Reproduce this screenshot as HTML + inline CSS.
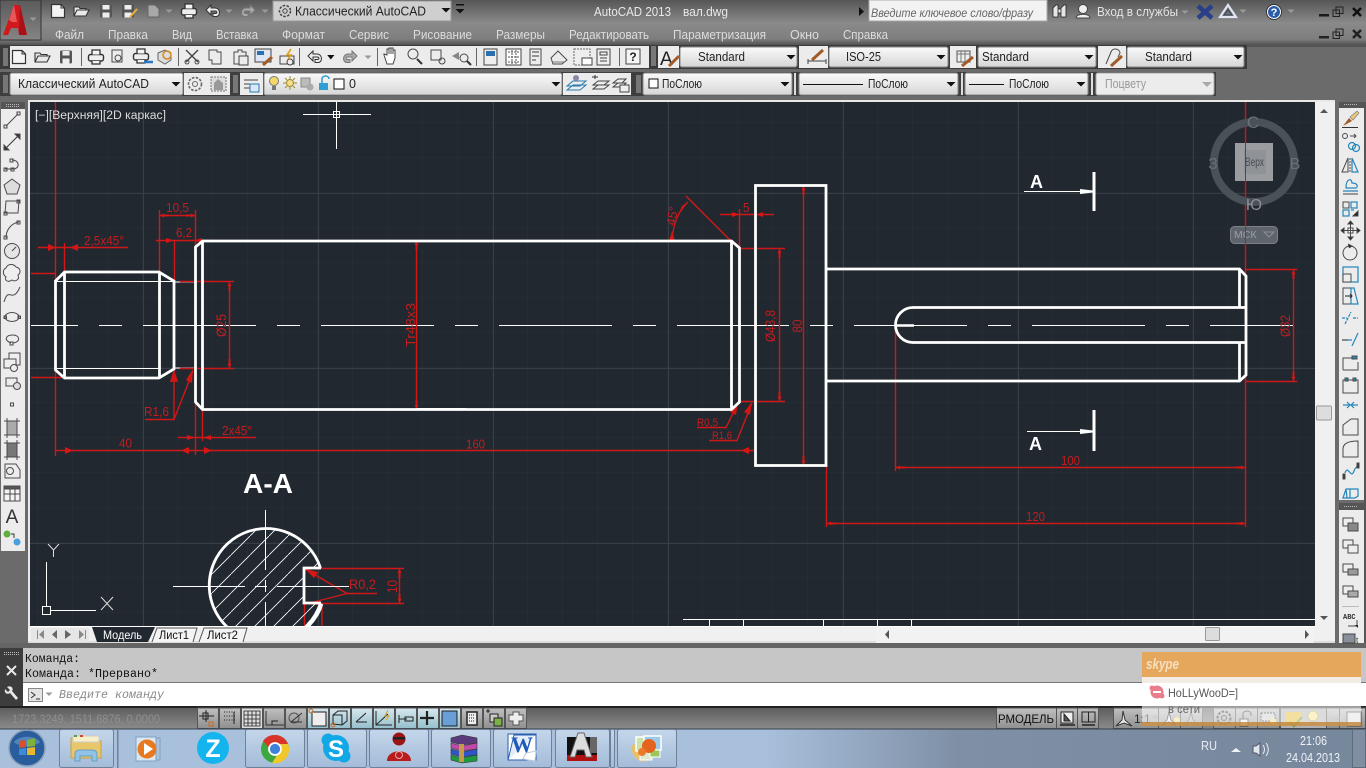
<!DOCTYPE html>
<html><head><meta charset="utf-8"><title>AutoCAD 2013 - вал.dwg</title>
<style>
html,body{margin:0;padding:0;width:1366px;height:768px;overflow:hidden;background:#666}
svg{display:block}
text{font-family:"Liberation Sans",sans-serif}
.m{font-size:12.5px;fill:#dcdcdc}
.c{font-size:12.5px;fill:#222}
.d{font-size:12.5px;fill:#c41d1d}
.i{fill:none;stroke:#4a4a4a;stroke-width:1}
.b{fill:none;stroke:#2586bb;stroke-width:1.2}
.r line,.r path{stroke:#d01818;stroke-width:1.4;fill:none}
.w{stroke:#fff;stroke-width:2.8;fill:none}
.t{stroke:#fff;stroke-width:1;fill:none}
</style></head><body>
<svg width="1366" height="768" viewBox="0 0 1366 768" xmlns="http://www.w3.org/2000/svg">
<defs>
<linearGradient id="tg" x1="0" y1="0" x2="0" y2="1"><stop offset="0" stop-color="#565656"/><stop offset=".5" stop-color="#8a8a8a"/><stop offset=".85" stop-color="#7e7e7e"/><stop offset="1" stop-color="#4a4a4a"/></linearGradient>
<linearGradient id="lg" x1="0" y1="0" x2="0" y2="1"><stop offset="0" stop-color="#5a5a5a"/><stop offset="1" stop-color="#858585"/></linearGradient>
<linearGradient id="cb" x1="0" y1="0" x2="0" y2="1"><stop offset="0" stop-color="#fafafa"/><stop offset="1" stop-color="#d6d6d6"/></linearGradient>
<linearGradient id="sb" x1="0" y1="0" x2="0" y2="1"><stop offset="0" stop-color="#5e5e5e"/><stop offset="1" stop-color="#8c8c8c"/></linearGradient>
<linearGradient id="sl" x1="0" y1="0" x2="0" y2="1"><stop offset="0" stop-color="#c0c0c0"/><stop offset="1" stop-color="#8f8f8f"/></linearGradient>
<linearGradient id="sbl" x1="0" y1="0" x2="0" y2="1"><stop offset="0" stop-color="#d8e8ee"/><stop offset="1" stop-color="#94bfcc"/></linearGradient>
<linearGradient id="task" x1="0" y1="0" x2="1" y2="0"><stop offset="0" stop-color="#a8c0dc"/><stop offset=".56" stop-color="#a8c0dc"/><stop offset=".7" stop-color="#7f90a6"/><stop offset="1" stop-color="#76879c"/></linearGradient>
<linearGradient id="btn" x1="0" y1="0" x2="0" y2="1"><stop offset="0" stop-color="#c4d6ea"/><stop offset="1" stop-color="#a3bcd9"/></linearGradient>
<pattern id="g1" width="35" height="35" patternUnits="userSpaceOnUse" x="3" y="18"><path d="M35 0V35M0 35H35" stroke="#2a3139" stroke-width="1" fill="none"/></pattern>
<pattern id="g2" width="175" height="175" patternUnits="userSpaceOnUse" x="143" y="18"><path d="M.5 0V175M0 .5H175" stroke="#373e45" stroke-width="1" fill="none"/></pattern>
<pattern id="hat" width="19" height="19" patternUnits="userSpaceOnUse" x="3" y="4"><path d="M0 19L19 0" stroke="#fff" stroke-width=".8" fill="none"/></pattern>
<pattern id="grip" width="2" height="2" patternUnits="userSpaceOnUse"><rect width="1" height="1" fill="#bbb"/></pattern>
<marker id="a" viewBox="0 0 9 5" refX="9" refY="2.500" markerWidth="9" markerHeight="5" markerUnits="userSpaceOnUse" orient="auto-start-reverse"><path d="M9 2.500L5 .5V1.500H0V3.500H5V4.500Z" fill="#d81515"/></marker>
<g id="doc"><path d="M-6.500-6.500H3L6.500-3V6.500H-6.500Z" style="fill:#f4f4f4;stroke:#333;stroke-width:1.200"/><path d="M3-6.500V-3H6.500" fill="none" stroke="#333"/></g>
<g id="open"><path d="M-7 5V-4H-2L-1-2.500H5V-1H-4L-7 5L-4-1H8L5 5Z" fill="#e8e8e8" stroke="#333" stroke-width="1.100"/></g>
<g id="save"><rect x="-6" y="-6.500" width="12" height="13" rx="1.500" fill="#555"/><rect x="-3.500" y="-6" width="7" height="4.500" fill="#eee"/><rect x="-3.500" y="1.500" width="7" height="5" fill="#eee"/></g>
<g id="print"><rect x="-7.500" y="-2.500" width="15" height="6.500" rx="2" fill="#eee" stroke="#333" stroke-width="1.400"/><path d="M-4-2.500V-7H4V-2.500M-4 4V7H4V4" fill="#f4f4f4" stroke="#333" stroke-width="1.300"/></g>
<g id="tri"><path d="M-3.500-1.500H3.500L0 2Z" fill="#9a9a9a"/></g>
<g id="ddk"><path d="M-4.500-2H4.500L0 2.500Z" fill="#111"/></g>
<g id="undo"><path d="M-7-1L-2-6V-3H2C7.500-3 8 5.500 3 5.500H0V2.500H2.500C4.500 2.500 4.500 0 2 0H-2V4Z" fill="#eee" stroke="#333"/></g>
<g id="redo"><path d="M7-1L2-6V-3H-2C-7.500-3-8 5.500-3 5.500H0V2.500H-2.500C-4.500 2.500-4.500 0-2 0H2V4Z" fill="#aaa" stroke="#777"/></g>
<g id="brush"><path d="M-8 7L-2-1L1 2Z" fill="#a25b26"/><path d="M-1-2L6-8L8-6L2 1Z" fill="#e8c878" stroke="#777" stroke-width=".6"/></g>
</defs>

<!-- base -->
<rect width="1366" height="768" fill="#6b6b6b"/>
<rect width="1366" height="46" fill="url(#tg)"/>
<rect y="44" width="1366" height="3" fill="#555"/>

<!-- logo -->
<rect x="0" y="0" width="41" height="40" fill="url(#lg)" stroke="#333"/>
<path d="M3 35L14 5H20L27 35H19L18 28H11L8 35Z" fill="#d0191d"/><path d="M14 5L17 22H12L9 20Z" fill="#e9565a"/><path d="M20 5L27 35H19Z" fill="#a81216"/>
<use href="#tri" x="33" y="19"/>

<!-- QAT -->
<use href="#doc" x="58" y="11"/><use href="#open" x="81" y="11"/><use href="#save" x="106" y="11"/><use href="#save" x="128" y="11"/>
<path d="M130 17L137 9" stroke="#e8b040" stroke-width="2"/>
<path d="M148 5H155L159 9V17H148Z" fill="#a8a8a8" stroke="#666"/>
<use href="#tri" x="169" y="11"/><use href="#print" x="189" y="11"/><use href="#undo" x="213" y="11"/><use href="#tri" x="229" y="11"/><use href="#redo" x="248" y="11"/><use href="#tri" x="265" y="11"/>
<rect x="273" y="1" width="178" height="20" fill="#cfcfcf" stroke="#999"/>
<circle cx="285" cy="11" r="5.500" fill="none" stroke="#444" stroke-width="1.500" stroke-dasharray="2.500 1.400"/><circle cx="285" cy="11" r="2.200" fill="none" stroke="#444"/>
<text x="295" y="15.500" font-size="13" fill="#222" textLength="131" lengthAdjust="spacingAndGlyphs">Классический AutoCAD</text>
<use href="#ddk" x="446" y="10"/><use href="#ddk" x="460" y="11"/><rect x="456" y="4" width="8" height="1.500" fill="#111"/>

<text x="594" y="16" font-size="13" fill="#e8e8e8" textLength="77" lengthAdjust="spacingAndGlyphs">AutoCAD 2013</text>
<text x="683" y="16" font-size="13" fill="#e8e8e8" textLength="45" lengthAdjust="spacingAndGlyphs">вал.dwg</text>
<path d="M859 7L864 11.500L859 16Z" fill="#111"/>
<rect x="869" y="0" width="178" height="21" fill="#f2f2f2" stroke="#aaa"/>
<text x="871" y="17" font-size="12" font-style="italic" fill="#666" textLength="162" lengthAdjust="spacingAndGlyphs">Введите ключевое слово/фразу</text>
<path d="M1053 17V8L1056 5H1058V17ZM1061 17V8L1064 5H1066V17Z M1058 9H1061V13H1058Z" fill="#e6e6e6" stroke="#222" stroke-width=".8"/>
<circle cx="1083" cy="9" r="4.500" fill="#eee" stroke="#444"/><path d="M1076 18C1076 13 1090 13 1090 18Z" fill="#eee" stroke="#444"/>
<text x="1097" y="16" font-size="12.500" fill="#e4e4e4" textLength="81" lengthAdjust="spacingAndGlyphs">Вход в службы</text>
<use href="#tri" x="1185" y="12" />
<path d="M1198 6L1212 18M1212 6L1198 18" stroke="#2a3f88" stroke-width="4.500"/>
<path d="M1228 5L1236 17H1220Z" fill="none" stroke="#dfe6f2" stroke-width="2.200"/><path d="M1228 10L1232 15H1224Z" fill="none" stroke="#345" />
<use href="#tri" x="1243" y="11"/>
<circle cx="1274" cy="12" r="7.500" fill="#fff" stroke="#333"/><circle cx="1274" cy="12" r="6" fill="#2b5ca8"/><text x="1274" y="16" font-size="11" font-weight="bold" fill="#fff" text-anchor="middle">?</text>
<use href="#tri" x="1291" y="11"/>
<rect x="1319" y="14" width="10" height="2.500" fill="#1a1a1a"/><g transform="translate(1338,13)"><rect x="-5" y="-3" width="6.500" height="6.500" fill="none" stroke="#222"/><rect x="-2" y="-6" width="7" height="6.500" fill="none" stroke="#222"/></g>
<path d="M1353 8L1361 16M1361 8L1353 16" stroke="#111" stroke-width="2.600"/>
<rect x="1319" y="36" width="10" height="2.500" fill="#222"/><g transform="translate(1338,35)"><rect x="-5" y="-3" width="6.500" height="6.500" fill="none" stroke="#222"/><rect x="-2" y="-6" width="7" height="6.500" fill="none" stroke="#222"/></g>
<path d="M1353 30L1361 38M1361 30L1353 38" stroke="#222" stroke-width="2.600"/>

<!-- menu -->
<text class="m" x="55" y="39" textLength="29" lengthAdjust="spacingAndGlyphs">Файл</text><text class="m" x="108" y="39" textLength="40" lengthAdjust="spacingAndGlyphs">Правка</text><text class="m" x="172" y="39" textLength="20" lengthAdjust="spacingAndGlyphs">Вид</text><text class="m" x="216" y="39" textLength="42" lengthAdjust="spacingAndGlyphs">Вставка</text><text class="m" x="282" y="39" textLength="43" lengthAdjust="spacingAndGlyphs">Формат</text><text class="m" x="349" y="39" textLength="40" lengthAdjust="spacingAndGlyphs">Сервис</text><text class="m" x="413" y="39" textLength="59" lengthAdjust="spacingAndGlyphs">Рисование</text><text class="m" x="496" y="39" textLength="49" lengthAdjust="spacingAndGlyphs">Размеры</text><text class="m" x="569" y="39" textLength="80" lengthAdjust="spacingAndGlyphs">Редактировать</text><text class="m" x="673" y="39" textLength="93" lengthAdjust="spacingAndGlyphs">Параметризация</text><text class="m" x="790" y="39" textLength="29" lengthAdjust="spacingAndGlyphs">Окно</text><text class="m" x="843" y="39" textLength="45" lengthAdjust="spacingAndGlyphs">Справка</text>

<!-- toolbar 1 -->
<rect x="0" y="45" width="1247" height="24" fill="#3b3b3b"/>
<rect x="10" y="46" width="639" height="22" fill="#ececec"/>
<rect x="3" y="48" width="5" height="18" fill="#777"/><rect x="651" y="46" width="5" height="20" fill="#777"/>
<rect x="658" y="46" width="21" height="22" fill="#ececec"/>
<use href="#doc" x="19" y="57"/><use href="#open" x="42" y="57"/><use href="#save" x="66" y="57"/><rect x="81" y="48" width="1" height="18" fill="#666"/>
<use href="#print" x="96" y="57"/><path class="i" d="M112 50H122V62H112Z"/><circle cx="118" cy="58" r="3" class="i"/>
<use href="#print" x="141" y="56"/><path d="M144 62H153" stroke="#2b78c4" stroke-width="2.500"/>
<path d="M158 53L165 50L171 53V60L165 64L158 60Z" fill="#ddd" stroke="#666"/><circle cx="167" cy="55" r="4" fill="none" stroke="#d48a20" stroke-width="1.500"/>
<rect x="178" y="48" width="1" height="18" fill="#666"/>
<path d="M186 50L198 62M198 50L186 62" stroke="#444" stroke-width="1.400"/><circle cx="187" cy="62" r="2" class="i"/><circle cx="197" cy="62" r="2" class="i"/>
<path class="i" d="M209 50H217V52H221V64H212V60H209Z"/><path class="i" d="M234 52H238V50H242V52H246V64H234Z"/><rect x="239" y="56" width="9" height="9" fill="#ececec" stroke="#444"/>
<rect x="255" y="49" width="16" height="13" fill="#dde6f2" stroke="#444"/><rect x="257" y="51" width="7" height="4" fill="#2a6fb0"/><path d="M263 65L272 57" stroke="#a25b26" stroke-width="3"/>
<rect x="280" y="56" width="14" height="8" fill="none" stroke="#444"/><circle cx="290" cy="62" r="3" fill="#eee" stroke="#444"/><path d="M291 49L287 55H291L288 59" stroke="#e0a020" stroke-width="1.600" fill="none"/>
<rect x="299" y="48" width="1" height="18" fill="#666"/>
<use href="#undo" x="315" y="57"/><use href="#ddk" x="331" y="57" transform="translate(66,0) scale(.8,1)"/><use href="#redo" x="350" y="57"/><use href="#tri" x="368" y="57"/>
<rect x="377" y="48" width="1" height="18" fill="#666"/>
<path d="M387 64L384 55V54L387 55V49H389V54V48H391V54V48H393V54V50H395V58L393 64Z" fill="#fff" stroke="#444"/>
<circle cx="413" cy="54" r="5" class="i"/><path d="M417 59L422 64" stroke="#333" stroke-width="2"/>
<rect class="i" x="431" y="50" width="10" height="10"/><circle cx="442" cy="61" r="3" class="i"/>
<path d="M452 56L459 52V60Z" fill="#888"/><circle cx="464" cy="58" r="4" class="i"/><path d="M467 61L471 65" stroke="#333" stroke-width="2"/>
<rect x="476" y="48" width="1" height="18" fill="#666"/>
<rect x="484" y="49" width="13" height="16" fill="#eee" stroke="#444"/><rect x="486" y="51" width="9" height="5" fill="#2a6fb0"/>
<rect x="506" y="49" width="15" height="16" fill="#fff" stroke="#444"/><path d="M508 52H519M508 57H519M508 62H519M512 50V64M516 50V64" stroke="#555" stroke-dasharray="2 1"/>
<path class="i" d="M530 49H541V65H530Z"/><path d="M532 52H539M532 56H539M532 60H536" stroke="#777" stroke-width="1.600"/>
<path class="i" d="M551 58L558 51L567 60L562 64H553Z"/><path d="M553 62L565 62" stroke="#777"/>
<rect x="574" y="49" width="16" height="16" fill="#eee" stroke="#666" stroke-dasharray="2 1"/><rect x="582" y="58" width="10" height="7" fill="#fff" stroke="#444"/>
<rect x="597" y="49" width="13" height="16" fill="#eee" stroke="#444"/><path d="M600 52H607V55H600ZM600 58H607M600 61H607" stroke="#444" fill="none"/>
<rect x="619" y="48" width="1" height="18" fill="#666"/>
<rect x="626" y="49" width="14" height="15" fill="#f5f5f5" stroke="#444"/><text x="633" y="61" font-size="12" font-weight="bold" fill="#222" text-anchor="middle">?</text>
<text x="660" y="65" font-size="19" fill="#222">A</text><path d="M669 66L679 56" stroke="#a25b26" stroke-width="3"/>

<rect x="680" y="47" width="117" height="20" rx="2" fill="url(#cb)" stroke="#888"/><text class="c" x="698" y="61" textLength="47" lengthAdjust="spacingAndGlyphs">Standard</text><use href="#ddk" x="791" y="57"/>
<rect x="799" y="46" width="29" height="22" fill="#ececec"/><path d="M808 64V59M826 64V59M808 61H826" stroke="#444"/><path d="M812 60L823 50" stroke="#a25b26" stroke-width="3"/>
<rect x="829" y="47" width="119" height="20" rx="2" fill="url(#cb)" stroke="#888"/><text class="c" x="846" y="61" textLength="35" lengthAdjust="spacingAndGlyphs">ISO-25</text><use href="#ddk" x="941" y="57"/>
<rect x="950" y="46" width="26" height="22" fill="#ececec"/><rect x="957" y="51" width="13" height="11" fill="#eee" stroke="#555"/><path d="M957 54H970M961 51V62M965 51V62" stroke="#777"/><path d="M962 66L973 57" stroke="#a25b26" stroke-width="3"/>
<rect x="978" y="47" width="118" height="20" rx="2" fill="url(#cb)" stroke="#888"/><text class="c" x="982" y="61" textLength="47" lengthAdjust="spacingAndGlyphs">Standard</text><use href="#ddk" x="1089" y="57"/>
<rect x="1098" y="46" width="28" height="22" fill="#ececec"/><path class="i" d="M1106 64L1111 52C1113 47 1120 49 1120 53L1118 57"/><path d="M1111 66L1122 56" stroke="#a25b26" stroke-width="3"/>
<rect x="1127" y="47" width="117" height="20" rx="2" fill="url(#cb)" stroke="#888"/><text class="c" x="1145" y="61" textLength="47" lengthAdjust="spacingAndGlyphs">Standard</text><use href="#ddk" x="1238" y="57"/>

<!-- toolbar 2 -->
<rect x="0" y="72" width="1216" height="24" fill="#3f3f3f"/>
<rect x="3" y="75" width="5" height="18" fill="#777"/>
<rect x="10" y="73" width="173" height="22" rx="2" fill="url(#cb)" stroke="#888"/><text class="c" x="18" y="88" textLength="131" lengthAdjust="spacingAndGlyphs">Классический AutoCAD</text><use href="#ddk" x="176" y="84"/>
<rect x="184" y="73" width="46" height="22" fill="#ececec"/>
<circle cx="195" cy="84" r="6.500" fill="none" stroke="#666" stroke-width="1.600" stroke-dasharray="2.500 1.400"/><circle cx="195" cy="84" r="2.500" fill="none" stroke="#666"/>
<rect x="211" y="77" width="15" height="14" fill="#ddd" stroke="#777" stroke-dasharray="2 1"/><path d="M214 90V83L218 79L223 83V90Z" fill="#999"/>
<rect x="233" y="75" width="5" height="18" fill="#777"/>
<rect x="240" y="73" width="23" height="22" fill="#ececec"/>
<path d="M244 80H258M244 84H258M244 88H252" stroke="#444"/><rect x="250" y="84" width="9" height="8" fill="#dbe7f2" stroke="#2b7ab0"/>
<rect x="264" y="73" width="298" height="22" rx="2" fill="url(#cb)" stroke="#888"/>
<circle cx="274" cy="81" r="4.500" fill="#f5d76a" stroke="#777"/><rect x="272" y="86" width="4" height="4" fill="#777"/>
<circle cx="290" cy="83" r="3.500" fill="#f5e08a" stroke="#a08a30"/><path d="M290 76V79M290 87V90M283 83H286M294 83H297M285 78L287 80M293 86L295 88M295 78L293 80M287 86L285 88" stroke="#a08a30"/>
<rect x="301" y="78" width="9" height="9" fill="#bbb" stroke="#888"/><circle cx="310" cy="87" r="3.500" fill="#aaa"/>
<rect x="319" y="83" width="9" height="7" fill="#2f9ed0"/><path d="M322 83V79C322 75 329 75 329 79" fill="none" stroke="#2f9ed0" stroke-width="1.500"/>
<rect x="334" y="79" width="10" height="10" fill="#fff" stroke="#111"/><text class="c" x="349" y="88" fill="#111">0</text>
<use href="#ddk" x="556" y="84"/>
<rect x="563" y="73" width="68" height="22" fill="#ececec"/>
<path d="M567 90L573 85H586L580 90ZM567 86L573 81H586L580 86Z" fill="none" stroke="#2b7ab0"/><circle cx="576" cy="78" r="3" fill="#88a"/>
<path d="M593 89L598 85H609L604 89ZM593 85L598 81H609L604 85Z" fill="none" stroke="#444"/><path d="M592 77H598M595 75V79" stroke="#333"/>
<path d="M613 87L618 83H626L622 87ZM613 83L618 79H626L622 83Z" fill="none" stroke="#444"/><rect x="620" y="85" width="9" height="7" fill="#eee" stroke="#444"/>
<rect x="636" y="75" width="5" height="18" fill="#777"/>
<rect x="643" y="73" width="149" height="22" rx="2" fill="url(#cb)" stroke="#888"/><rect x="649" y="79" width="9" height="9" fill="#fff" stroke="#111"/><text class="c" x="662" y="88" textLength="40" lengthAdjust="spacingAndGlyphs">ПоСлою</text><use href="#ddk" x="785" y="84"/>
<rect x="794" y="73" width="2" height="22" fill="#ddd"/>
<rect x="799" y="73" width="159" height="22" rx="2" fill="url(#cb)" stroke="#888"/><rect x="803" y="84" width="60" height="1" fill="#111"/><text class="c" x="868" y="88" textLength="40" lengthAdjust="spacingAndGlyphs">ПоСлою</text><use href="#ddk" x="951" y="84"/>
<rect x="961" y="73" width="2" height="22" fill="#ddd"/>
<rect x="965" y="73" width="123" height="22" rx="2" fill="url(#cb)" stroke="#888"/><rect x="969" y="84" width="35" height="1" fill="#111"/><text class="c" x="1009" y="88" textLength="40" lengthAdjust="spacingAndGlyphs">ПоСлою</text><use href="#ddk" x="1081" y="84"/>
<rect x="1091" y="73" width="2" height="22" fill="#ddd"/>
<rect x="1096" y="73" width="118" height="22" rx="2" fill="#ececec" stroke="#aaa"/><text class="c" x="1105" y="88" style="fill:#999" textLength="41" lengthAdjust="spacingAndGlyphs">Поцвету</text><path d="M1202 82H1212L1207 87Z" fill="#aaa"/>

<!-- frame -->
<rect x="28" y="100" width="1307" height="545" fill="#e8e8e8"/>

<!-- canvas -->
<rect x="30" y="102" width="1285" height="525" fill="#212830"/>
<svg x="30" y="102" width="1285" height="525" viewBox="30 102 1285 525">
<rect x="30" y="102" width="1285" height="525" fill="url(#g1)"/>
<rect x="30" y="102" width="1285" height="525" fill="url(#g2)"/>

<!-- centre line -->
<path class="t" d="M31 325.500H78M99 325.500H122M143 325.500H256M277 325.500H300M321 325.500H434M455 325.500H478M499 325.500H612M633 325.500H656M677 325.500H789M810 325.500H833M854 325.500H967M988 325.500H1011M1032 325.500H1145M1166 325.500H1189M1210 325.500H1293"/>

<!-- thin white -->
<path class="t" d="M56 281.500H174M56 368.500H159M174 282H195M174 368H195M739 248.500H755M739 401.500H755"/>
<path class="t" d="M416 241.500H466M416 408.500H466M790 185.500H812M790 465.500H812"/>

<!-- red dims -->
<g class="r">
<line x1="55.500" y1="102" x2="55.500" y2="456"/>
<line x1="1245.500" y1="102" x2="1245.500" y2="527"/>
<line x1="38" y1="247.500" x2="128" y2="247.500"/>
<line x1="64.500" y1="243" x2="64.500" y2="272"/>
<line x1="31" y1="273.500" x2="56" y2="273.500"/><line x1="31" y1="377.500" x2="64" y2="377.500"/>
<line x1="159.500" y1="210" x2="159.500" y2="272"/><line x1="195.500" y1="210" x2="195.500" y2="247"/>
<line x1="160" y1="215.500" x2="195" y2="215.500" marker-start="url(#a)" marker-end="url(#a)"/>
<line x1="156" y1="240.500" x2="214" y2="240.500"/><line x1="174.500" y1="240" x2="174.500" y2="281"/>
<line x1="229.500" y1="282" x2="229.500" y2="368" marker-start="url(#a)" marker-end="url(#a)"/>
<line x1="180" y1="281.500" x2="234" y2="281.500"/><line x1="180" y1="368.500" x2="234" y2="368.500"/>
<line x1="174" y1="370" x2="174" y2="419.500"/><path d="M145 419.500H174L193 371"/>
<path d="M174 369L178 382H170Z" style="fill:#d01515;stroke:none"/><path d="M193 369L192 383L186 380Z" style="fill:#d01515;stroke:none"/>
<line x1="55" y1="450.500" x2="755" y2="450.500"/>
<line x1="195.500" y1="370" x2="195.500" y2="455"/><line x1="202.500" y1="409" x2="202.500" y2="441"/>
<line x1="178" y1="437.500" x2="256" y2="437.500"/>
<line x1="416.500" y1="241" x2="416.500" y2="409" marker-start="url(#a)" marker-end="url(#a)"/>
<path d="M672 241C673 224 678 211 688 202"/>
<line x1="686" y1="196" x2="731" y2="241"/>
<line x1="720" y1="214.500" x2="774" y2="214.500"/><line x1="739.500" y1="209" x2="739.500" y2="255"/><line x1="755.500" y1="209" x2="755.500" y2="255"/>
<line x1="779.500" y1="249" x2="779.500" y2="401" marker-start="url(#a)" marker-end="url(#a)"/>
<line x1="740" y1="248.500" x2="785" y2="248.500"/><line x1="740" y1="401.500" x2="785" y2="401.500"/>
<line x1="803.500" y1="186" x2="803.500" y2="465" marker-start="url(#a)" marker-end="url(#a)"/>
<path d="M697 427.500H726L738 403"/><path d="M709 440.500H737L752 403"/>
<path d="M738 402L736 415L730 412Z" style="fill:#d01515;stroke:none"/><path d="M752 402L750 415L744 412Z" style="fill:#d01515;stroke:none"/>
<line x1="895.500" y1="326" x2="895.500" y2="471"/>
<line x1="896" y1="467.500" x2="1245" y2="467.500" marker-start="url(#a)" marker-end="url(#a)"/>
<line x1="826.500" y1="466" x2="826.500" y2="527"/>
<line x1="827" y1="523.500" x2="1245" y2="523.500" marker-start="url(#a)" marker-end="url(#a)"/>
<line x1="1293.500" y1="270" x2="1293.500" y2="381" marker-start="url(#a)" marker-end="url(#a)"/>
<line x1="1246" y1="269.500" x2="1297" y2="269.500"/><line x1="1246" y1="381.500" x2="1297" y2="381.500"/>
<line x1="304" y1="568.500" x2="404" y2="568.500"/><line x1="304" y1="603.500" x2="404" y2="603.500"/>
<line x1="399.500" y1="569" x2="399.500" y2="603" marker-start="url(#a)" marker-end="url(#a)"/>
<path d="M377 593.500H347L305 569M347 593.500L306 604"/>
<path d="M304.500 604V627M322 604V627"/>
</g>
<path d="M48 244L56 247.500L48 251ZM78 244L70 247.500L78 251Z" fill="#d81515"/>
<path d="M166 238L174 240.500L166 243ZM202 238L194 240.500L202 243Z" fill="#d81515"/>
<path d="M65 447L73 450.500L65 454ZM189 447L181 450.500L189 454ZM204 447L212 450.500L204 454ZM749 447L741 450.500L749 454Z" fill="#d81515"/>
<path d="M187 435L195 437.500L187 440ZM211 435L203 437.500L211 440ZM732 212L739 214.500L732 217ZM763 212L756 214.500L763 217Z" fill="#d81515"/>
<path d="M669 241L675 241L672 231ZM682 206L688 202L678 216Z" fill="#d81515"/>
<path d="M305 569L318 572L314 578ZM306 604L320 600L320 605Z" fill="#d81515"/>

<!-- red text -->
<text class="d" x="84" y="245" textLength="40" lengthAdjust="spacingAndGlyphs">2,5x45°</text>
<text class="d" x="166" y="212" textLength="23" lengthAdjust="spacingAndGlyphs">10,5</text>
<text class="d" x="176" y="237" textLength="16" lengthAdjust="spacingAndGlyphs">6,2</text>
<text class="d" x="144" y="416" textLength="25" lengthAdjust="spacingAndGlyphs">R1,6</text>
<text class="d" x="119" y="447.500" textLength="13" lengthAdjust="spacingAndGlyphs">40</text>
<text class="d" x="222" y="435" textLength="30" lengthAdjust="spacingAndGlyphs">2x45°</text>
<text class="d" x="466" y="448.500" textLength="19" lengthAdjust="spacingAndGlyphs">160</text>
<text class="d" x="743" y="212" textLength="6.500" lengthAdjust="spacingAndGlyphs">5</text>
<text class="d" x="697" y="426" style="font-size:11px" textLength="21" lengthAdjust="spacingAndGlyphs">R0,5</text>
<text class="d" x="712" y="439" style="font-size:11px" textLength="20" lengthAdjust="spacingAndGlyphs">R1,6</text>
<text class="d" x="1061" y="465" textLength="19" lengthAdjust="spacingAndGlyphs">100</text>
<text class="d" x="1026" y="521" textLength="19" lengthAdjust="spacingAndGlyphs">120</text>
<text class="d" x="349" y="589" style="font-size:13.500px" textLength="27" lengthAdjust="spacingAndGlyphs">R0,2</text>
<text class="d" transform="translate(226,337) rotate(-90)" style="font-size:14px" textLength="23" lengthAdjust="spacingAndGlyphs">Ø25</text>
<text class="d" transform="translate(415,347) rotate(-90)" style="font-size:13px" textLength="44" lengthAdjust="spacingAndGlyphs">Tr48x3</text>
<text class="d" transform="translate(675,226) rotate(-80)" style="font-size:13px" textLength="19" lengthAdjust="spacingAndGlyphs">45°</text>
<text class="d" transform="translate(775,342) rotate(-90)" style="font-size:13.500px" textLength="32" lengthAdjust="spacingAndGlyphs">Ø43,8</text>
<text class="d" transform="translate(802,332.500) rotate(-90)" style="font-size:13.500px" textLength="13" lengthAdjust="spacingAndGlyphs">80</text>
<text class="d" transform="translate(1290,337) rotate(-90)" style="font-size:14px" textLength="22" lengthAdjust="spacingAndGlyphs">Ø32</text>
<text class="d" transform="translate(397,593) rotate(-90)" style="font-size:13.500px" textLength="13" lengthAdjust="spacingAndGlyphs">10</text>

<!-- shaft -->
<path class="w" d="M55.500 281V370L64.500 378H159L174 369V281L159 272H64.500L55.500 281Z"/>
<path class="w" d="M64.500 272V378M159.500 272V378"/>
<path class="w" d="M195.500 247V402L202.500 409.500H731.500L739.500 402V248L731.500 241H202.500L195.500 247Z"/>
<path class="w" d="M202.500 241V409.500M731.500 241V409.500"/>
<rect x="755.500" y="185.500" width="70.500" height="280" class="w"/>
<path class="w" d="M826 269H1239.500L1246 276V375L1239.500 381H826"/>
<path class="w" d="M1246 307.500H913A17.500 17.500 0 0 0 913 342.500H1246M1239.500 269V307M1239.500 343V381"/>
<path d="M895 325.500H914" stroke="#fff" stroke-width="2.500"/>

<!-- section marks -->
<text x="1030" y="188" font-size="18" font-weight="bold" fill="#fff">A</text>
<path class="t" d="M1024 191.500H1086"/><path d="M1080 189L1093 190.500V192.500L1080 194Z" fill="#fff"/>
<rect x="1092.500" y="172" width="3" height="39" fill="#fff"/>
<text x="1029" y="450" font-size="18" font-weight="bold" fill="#fff">A</text>
<path class="t" d="M1027 431.500H1086"/><path d="M1080 429L1093 430.500V432.500L1080 434Z" fill="#fff"/>
<rect x="1092.500" y="410" width="3" height="41" fill="#fff"/>

<!-- section A-A -->
<text x="243" y="493" font-size="28" font-weight="bold" fill="#fff" textLength="50" lengthAdjust="spacingAndGlyphs">A-A</text>
<path d="M320 568A57 57 0 1 0 320 603H304V568Z" fill="url(#hat)"/>
<path class="w" d="M320.500 568A57 57 0 1 0 320.500 603"/>
<path class="w" d="M321 568H304V603H321"/>
<path d="M322 604C320 612 315 620 307 628" fill="none" stroke="#fff" stroke-width="2.500"/>
<path class="t" d="M173 586.500H245M255 586.500H267M277 586.500H349M265.500 510V570M265.500 580V592M265.500 602V627"/>

<!-- title block -->
<path class="t" d="M683 619.500H1315M709.500 620V627M743.500 620V627M823.500 620V627M877.500 620V627M911.500 620V627"/>
<rect x="30" y="626" width="1285" height="1" fill="#fff"/>

<!-- crosshair -->
<path class="t" d="M303 114.500H371M336.500 102V149"/><rect x="333.500" y="111.500" width="6" height="6" fill="none" stroke="#fff"/>

<!-- label -->
<text x="35" y="119" font-size="11.500" fill="#dcdcdc" textLength="131" lengthAdjust="spacingAndGlyphs">[−][Верхняя][2D каркас]</text>

<!-- UCS -->
<path class="t" d="M46.500 562V607M50 610.500H96"/><rect x="42.500" y="606.500" width="8" height="8" fill="none" stroke="#fff"/>
<path d="M48 544L53.500 550L59 544M53.500 550V557" fill="none" stroke="#ddd"/>
<path d="M101 597L113 610M113 597L101 610" stroke="#ddd" fill="none"/>

<!-- view cube -->
<circle cx="1254" cy="162" r="40" fill="none" stroke="#4b5158" stroke-width="8"/>
<rect x="1235" y="143" width="38" height="38" fill="#9a9c9f"/><rect x="1244" y="150" width="22" height="24" fill="#8f9296"/>
<text x="1245" y="166" font-size="12" fill="#4a4f55" textLength="19" lengthAdjust="spacingAndGlyphs">Верх</text>
<text x="1253" y="128" font-size="17" fill="#6a7077" text-anchor="middle">С</text>
<text x="1295" y="169" font-size="16" fill="#6a7077" text-anchor="middle">В</text>
<text x="1254" y="210" font-size="16" fill="#8a8f94" text-anchor="middle">Ю</text>
<text x="1213" y="169" font-size="16" fill="#6a7077" text-anchor="middle">З</text>
<rect x="1230.500" y="226.500" width="47" height="17" rx="4" fill="#5e656d" stroke="#7b8187"/>
<text x="1234" y="238" font-size="10.500" fill="#9ba0a5">МСК</text><path d="M1264 232H1274L1269 237Z" fill="none" stroke="#8b9096"/>
<rect x="1245" y="102" width="1" height="160" fill="#c41a1a"/>
</svg>

<!-- right scrollbar -->
<rect x="1315" y="102" width="20" height="525" fill="#f0f0f0"/>
<path d="M1320 113H1328L1324 109Z" fill="#555"/><path d="M1320 616H1328L1324 620Z" fill="#555"/>
<rect x="1316.500" y="406" width="15" height="14" rx="1" fill="#ddd" stroke="#999"/>

<!-- bottom tabs -->
<rect x="28" y="627" width="1307" height="16" fill="#f0f0f0"/>
<rect x="28" y="641" width="1307" height="2" fill="#ddd"/>
<g fill="#888">
<rect x="31" y="628" width="58" height="14" fill="#e6e6e6"/>
<rect x="37" y="630" width="1" height="9"/><path d="M44 630L39 634.500L44 639Z"/>
<path d="M57 630L52 634.500L57 639Z" fill="#666"/><path d="M65 630L71 634.500L65 639Z" fill="#666"/>
<path d="M79 630L84 634.500L79 639Z"/><rect x="85" y="630" width="1" height="9"/>
</g>
<path d="M92 627L97 642H148L155 627Z" fill="#212830"/>
<text x="103" y="639" font-size="11.500" fill="#fff" textLength="39" lengthAdjust="spacingAndGlyphs">Модель</text>
<path d="M152 642L157 628H197L193 642" fill="#f4f4f4" stroke="#555"/>
<text x="159" y="639" font-size="11.500" fill="#111" textLength="30" lengthAdjust="spacingAndGlyphs">Лист1</text>
<path d="M199 642L204 628H247L243 642" fill="#f4f4f4" stroke="#555"/>
<text x="207" y="639" font-size="11.500" fill="#111" textLength="31" lengthAdjust="spacingAndGlyphs">Лист2</text>
<rect x="876" y="627" width="438" height="16" fill="#f2f2f2"/>
<path d="M889 630L885 634.500L889 639Z" fill="#555"/><path d="M1305 630L1309 634.500L1305 639Z" fill="#555"/>
<rect x="1205.500" y="627.500" width="14" height="13" rx="1" fill="#ddd" stroke="#999"/>

<!-- gray band -->
<rect x="0" y="643" width="1366" height="5" fill="#646464"/>

<!-- left toolbar -->
<rect x="1" y="102" width="24" height="449" fill="#ececec"/><rect x="1" y="102" width="24" height="7" fill="#555"/><rect x="5" y="104" width="14" height="3" fill="url(#grip)"/>
<g class="i">
<path d="M6 126L18 114"/><rect x="4" y="125" width="3" height="3"/><rect x="17" y="112" width="3" height="3"/>
<path d="M6 148L18 136" stroke="#333"/><path d="M4 150L9 150L4 145Z" fill="#333"/><path d="M20 134L15 134L20 139Z" fill="#333"/>
<path d="M5 169H13C20 169 20 160 12 160"/><rect x="4" y="168" width="3" height="3"/><rect x="11" y="168" width="3" height="3"/><rect x="10" y="159" width="3" height="3"/>
<path d="M12 179L20 185L17 194H7L4 185Z" fill="#ddd"/>
<path d="M6 201H19L18 213H5Z" fill="#e8e8e8"/><rect x="4" y="212" width="3" height="3"/><rect x="17" y="200" width="3" height="3"/>
<path d="M6 238C6 229 12 223 19 222"/><rect x="4" y="236" width="3" height="3"/><rect x="17" y="221" width="3" height="3"/>
<circle cx="12" cy="251" r="7.500" fill="#e4e4e4"/><path d="M12 251L16 247"/>
<path d="M6 268C8 263 14 264 16 267C21 268 21 273 18 275C20 280 15 282 12 280C8 283 4 280 6 277C2 274 3 269 6 268Z" fill="#eee"/>
<path d="M4 302C9 285 12 305 20 287"/>
<ellipse cx="12" cy="317" rx="7" ry="4.500"/><rect x="4" y="316" width="2.500" height="2.500"/><rect x="18" y="316" width="2.500" height="2.500"/>
<path d="M11 343C3 340 6 335 13 335C20 335 21 342 13 343"/><rect x="10" y="342" width="3" height="3"/>
<rect x="9" y="353" width="11" height="12" fill="#eee"/><rect x="4" y="359" width="12" height="9" fill="#eee"/><circle cx="14" cy="368" r="3.500" fill="#eee"/>
<rect x="6" y="378" width="11" height="8"/><circle cx="17" cy="386" r="3.500" fill="#ddd"/>
<rect x="10.500" y="403" width="3" height="3"/>
<path d="M4 421H20M4 435H20M7 418V438M17 418V438"/><rect x="7" y="421" width="10" height="14" fill="#aaa"/>
<path d="M4 443H20M4 457H20M7 440V460M17 440V460"/><rect x="7" y="443" width="10" height="14" fill="#777"/>
<path d="M5 464H16L20 470V478H5Z"/><circle cx="10" cy="471" r="3.500"/>
<rect x="4" y="486" width="16" height="15" fill="#f4f4f4"/><rect x="4" y="486" width="16" height="3" fill="#555"/><path d="M4 494H20M10 489V501M15 489V501"/>
</g>
<text x="12" y="523" font-size="19" fill="#333" text-anchor="middle">A</text>
<circle cx="7" cy="534" r="3.500" fill="#5fae3e"/><circle cx="17" cy="542" r="3.500" fill="#4aa0dc"/><path d="M11 534H14V538" fill="none" stroke="#333"/>

<!-- right toolbar -->
<rect x="1339" y="102" width="25" height="398" fill="#ececec"/><rect x="1339" y="102" width="25" height="6" fill="#555"/><rect x="1344" y="103" width="13" height="3" fill="url(#grip)"/>
<rect x="1339" y="508" width="25" height="135" fill="#ececec"/><rect x="1339" y="503" width="25" height="7" fill="#555"/><rect x="1344" y="505" width="13" height="3" fill="url(#grip)"/>
<use href="#brush" x="1351" y="119"/><rect x="1342" y="127" width="16" height="1" fill="#333"/>
<g class="i">
<circle cx="1345" cy="136" r="2.500"/><path d="M1350 136H1356M1354 134L1356 136L1354 138"/>
<g class="b"><circle cx="1352" cy="146" r="3.500"/><circle cx="1356" cy="148" r="3.500"/></g>
<path d="M1342 172L1348 158V172Z"/><path d="M1350 158V172" stroke-dasharray="2 1"/><path class="b" d="M1352 172V158L1358 172Z"/>
<path class="b" d="M1343 191H1358M1346 188C1346 178 1352 178 1352 183C1358 183 1358 187 1356 188H1346Z"/><path d="M1343 194H1358" stroke="#444"/>
<rect x="1343" y="202" width="6" height="6"/><rect class="b" x="1351" y="202" width="6" height="6"/><rect class="b" x="1343" y="210" width="6" height="6"/><path class="b" d="M1351 210H1354"/><path d="M1358 211V216H1353Z" fill="#222"/>
<rect x="1348" y="228" width="5" height="5" fill="#fff"/><path d="M1350.500 222V239M1342 230.500H1359"/><path d="M1348 224L1350.500 221L1353 224ZM1348 237L1350.500 240L1353 237ZM1344 228L1341 230.500L1344 233ZM1357 228L1360 230.500L1357 233Z" fill="#222"/>
<circle cx="1350" cy="253" r="7"/><path d="M1348 244L1352 246L1349 248" fill="#222"/>
<rect class="b" x="1343" y="267" width="15" height="15"/><rect x="1343" y="274" width="8" height="8" fill="#eee"/>
<path d="M1343 288H1351V304H1343Z"/><path class="b" d="M1351 288H1354L1358 304H1351Z"/><path d="M1345 296H1352M1350 294L1352 296L1350 298" stroke="#222"/>
<path class="b" d="M1345 324L1351 312M1342 318H1347M1353 318H1358" stroke-dasharray="3 1"/>
<path d="M1342 340H1349" stroke="#222"/><path class="b" d="M1352 346L1358 333M1348 340H1352"/>
<path d="M1343 370V358H1353" /><path d="M1343 370H1358V362" /><rect x="1352" y="356" width="5" height="3" fill="#2586bb"/>
<rect x="1343" y="380" width="15" height="13"/><rect x="1345" y="378" width="3" height="3" fill="#2586bb"/><rect x="1353" y="378" width="3" height="3" fill="#2586bb"/>
<path class="b" d="M1343 405H1358M1347 402L1350 405L1347 408M1354 402L1351 405L1354 408"/>
<path d="M1343 435V425L1351 419H1358V435Z"/><path d="M1343 457V449C1343 443 1350 441 1358 441V457Z"/>
<path class="b" d="M1345 473C1348 464 1351 480 1354 471C1355 468 1356 467 1358 466"/><rect x="1343" y="474" width="2" height="5" fill="#333"/><rect x="1357" y="463" width="2" height="5" fill="#333"/>
<path class="b" d="M1343 498L1346 489H1358V496L1355 498H1343ZM1346 489L1347 498M1350 489V498"/>
</g>
<g class="i">
<rect x="1343" y="518" width="10" height="8" fill="#eee"/><rect x="1348" y="523" width="10" height="8" fill="#888"/>
<rect x="1343" y="540" width="10" height="8" fill="#eee"/><rect x="1348" y="545" width="10" height="8" fill="#eee"/>
<rect x="1343" y="564" width="10" height="8" fill="#eee"/><rect x="1348" y="569" width="10" height="6" fill="#999"/>
<rect x="1343" y="586" width="10" height="8" fill="#eee"/><rect x="1348" y="591" width="10" height="6" fill="#aaa"/>
</g>
<rect x="1342" y="606" width="17" height="1" fill="#bbb"/>
<text x="1343" y="619" font-size="7" font-weight="bold" fill="#333" style="font-family:'Liberation Mono',monospace">ABC</text>
<path class="i" d="M1348 626H1357V620"/><path d="M1358 628V625H1355Z" fill="#222"/>
<rect x="1343" y="634" width="12" height="9" fill="#8a9099" stroke="#444"/><text x="1356" y="643" font-size="8" fill="#333">t</text>
<rect x="1364" y="102" width="2" height="541" fill="#555"/>

<!-- command -->
<rect x="0" y="648" width="23" height="58" fill="#3d3d3d"/>
<rect x="4" y="651" width="15" height="4" fill="url(#grip)"/>
<path d="M7 666L16 675M16 666L7 675" stroke="#e8e8e8" stroke-width="2"/>
<path d="M7 687L10 690L8 692L5 689C4 693 7 695 10 693L16 700L18 698L12 691C14 688 11 685 7 687Z" fill="#e8e8e8"/>
<rect x="23" y="648" width="1343" height="34" fill="#c6c6c6"/>
<rect x="23" y="682" width="1343" height="1" fill="#777"/>
<rect x="23" y="683" width="1343" height="23" fill="#fff"/>
<text x="25" y="662" font-size="11.500" fill="#111" style="font-family:'Liberation Mono',monospace" textLength="55" lengthAdjust="spacingAndGlyphs">Команда:</text>
<text x="25" y="677" font-size="11.500" fill="#111" style="font-family:'Liberation Mono',monospace" textLength="133" lengthAdjust="spacingAndGlyphs">Команда:  *Прервано*</text>
<rect x="28.500" y="688.500" width="14" height="13" fill="#e4e4e4" stroke="#888"/><path d="M31 692L35 695L31 698M36 699H40" fill="none" stroke="#333"/>
<use href="#tri" x="49" y="694"/>
<text x="59" y="698" font-size="11.500" font-style="italic" fill="#8a8a8a" style="font-family:'Liberation Mono',monospace" textLength="105" lengthAdjust="spacingAndGlyphs">Введите команду</text>

<!-- status bar -->
<rect y="706" width="1366" height="2" fill="#222"/>
<rect y="708" width="1366" height="21" fill="url(#sb)"/>
<text x="12" y="723" font-size="12" fill="#8f8f8f" textLength="148" lengthAdjust="spacingAndGlyphs">1723.3249, 1511.6876, 0.0000</text>
<g stroke="#555">
<rect x="197.500" y="708" width="21" height="20.500" fill="url(#sl)"/><rect x="219.500" y="708" width="21" height="20.500" fill="url(#sl)"/><rect x="241.500" y="708" width="21" height="20.500" fill="#ddd"/><rect x="263.500" y="708" width="21" height="20.500" fill="url(#sl)"/><rect x="285.500" y="708" width="21" height="20.500" fill="url(#sl)"/>
<rect x="307.500" y="708" width="21" height="20.500" fill="url(#sbl)"/><rect x="329.500" y="708" width="21" height="20.500" fill="url(#sbl)"/><rect x="351.500" y="708" width="21" height="20.500" fill="url(#sbl)"/><rect x="373.500" y="708" width="21" height="20.500" fill="url(#sbl)"/><rect x="395.500" y="708" width="21" height="20.500" fill="url(#sbl)"/><rect x="417.500" y="708" width="21" height="20.500" fill="url(#sbl)"/><rect x="439.500" y="708" width="21" height="20.500" fill="url(#sbl)"/>
<rect x="461.500" y="708" width="21" height="20.500" fill="url(#sl)"/><rect x="483.500" y="708" width="21" height="20.500" fill="url(#sl)"/><rect x="505.500" y="708" width="21" height="20.500" fill="url(#sl)"/>
<rect x="996.500" y="708" width="60" height="20.500" fill="url(#sl)"/><rect x="1056.500" y="708" width="21" height="20.500" fill="url(#sl)"/><rect x="1077.500" y="708" width="21" height="20.500" fill="url(#sl)"/>
<rect x="1113.500" y="708" width="45" height="20.500" fill="url(#sl)"/><rect x="1158.500" y="708" width="22" height="20.500" fill="url(#sl)"/><rect x="1180.500" y="708" width="22" height="20.500" fill="url(#sl)"/>
<rect x="1213.500" y="708" width="22" height="20.500" fill="url(#sl)"/><rect x="1235.500" y="708" width="22" height="20.500" fill="url(#sl)"/><rect x="1257.500" y="708" width="22" height="20.500" fill="url(#sl)"/><rect x="1280.500" y="708" width="46" height="20.500" fill="#b2b2b2"/><rect x="1326.500" y="708" width="13" height="20.500" fill="url(#sl)"/><rect x="1339.500" y="708" width="26" height="20.500" fill="url(#sl)"/>
</g>
<g fill="none" stroke="#222">
<path d="M199 716H214M206 710V722"/><rect x="203" y="713" width="5" height="6"/><rect x="209" y="722" width="4" height="4" stroke="#c86a20"/>
<path d="M224 712H236M224 716H236M224 720H236" stroke-dasharray="1 1.500"/><path d="M234 712V724"/>
<path d="M244 711H260V726H244ZM244 715H260M244 719H260M244 723H260M248 711V726M252 711V726M256 711V726" stroke-width=".8"/>
<path d="M266 711V725H284" stroke="#333"/><path d="M272 725V721H278"/>
<circle cx="294" cy="718" r="5" stroke="#555"/><path d="M291 722L302 713M291 722H302" stroke="#333"/>
<rect x="312" y="712" width="14" height="14" fill="#eee" stroke="#222"/><circle cx="311" cy="711" r="2" stroke="#c86a20"/>
<path d="M333 724V715L338 711H347V721L342 725ZM333 715H342V725" stroke="#222"/><circle cx="333" cy="725" r="2" stroke="#c86a20"/>
<path d="M356 722L366 713M356 722H367"/><path d="M376 711V725H392M376 725L388 714" /><path d="M388 710L385 716H389L386 720" stroke="#e0a020"/>
<path d="M399 715V723M399 719H407"/><rect x="405" y="717" width="8" height="4"/>
<path d="M427 711V725M420 718H434" stroke-width="2.200"/>
<rect x="442" y="711" width="15" height="15" fill="#6a9ed6" stroke="#222"/>
<rect x="467" y="712" width="10" height="13" stroke-width="1.500" fill="#eee"/><path d="M469 715H475M469 718H475M469 721H475" stroke-dasharray="1 1"/>
<path d="M486 711H490M488 709V713"/><rect x="490" y="714" width="8" height="8" fill="#ccc"/><rect x="494" y="718" width="8" height="8" fill="#7bb04b"/>
<path d="M513 712H519V715H523V721H519V725H513V721H509V715H513Z" fill="#eee" stroke="#555"/>
</g>
<text x="998" y="723" font-size="12" fill="#111" textLength="56" lengthAdjust="spacingAndGlyphs">РМОДЕЛЬ</text>
<g fill="none" stroke="#222"><rect x="1061" y="712" width="12" height="11" fill="#eee"/><path d="M1064 721V714L1070 721Z" fill="#555"/><path d="M1060 725H1075" stroke-width="1.500"/><path d="M1082 712H1095V722H1082ZM1088.500 712V722"/><path d="M1082 725H1095" stroke-width="1.500"/></g>
<path d="M1123 711L1125 720L1132 726L1124 723L1116 726L1122 720Z" fill="#eee" stroke="#333"/>
<text x="1134" y="723" font-size="12" fill="#222">1:1</text><use href="#tri" x="1155" y="717" />
<path d="M1169 712L1171 720L1176 725L1169 722L1162 725L1167 720Z" fill="#eee" stroke="#333"/><circle cx="1177" cy="720" r="3" fill="#f0dc80"/>
<path d="M1191 712L1193 720L1198 725L1191 722L1184 725L1189 720Z" fill="#bbb" stroke="#666"/>
<circle cx="1224" cy="718" r="6.500" fill="none" stroke="#333" stroke-width="2" stroke-dasharray="2.500 1.500"/><circle cx="1224" cy="718" r="2.500" fill="none" stroke="#333"/>
<rect x="1240" y="719" width="8" height="7" fill="#eee" stroke="#333"/><path d="M1243 719V714C1243 710 1251 710 1251 714V716" fill="none" stroke="#333"/>
<rect x="1261" y="713" width="14" height="8" fill="#ccc" stroke="#333" stroke-dasharray="2 1"/><circle cx="1273" cy="721" r="3" fill="#f0dc80"/>
<rect x="1286" y="712" width="15" height="13" fill="#e5b830"/><path d="M1290 722L1294 726L1302 717" stroke="#5a9a30" stroke-width="2" fill="none"/>
<circle cx="1313" cy="716" r="5" fill="#f6e58f" stroke="#bba84a"/><rect x="1311" y="721" width="4" height="4" fill="#999"/>
<use href="#tri" x="1337" y="719"/><rect x="1347" y="712" width="14" height="14" fill="#ddd" stroke="#444"/>

<!-- taskbar -->
<rect y="729" width="1366" height="39" fill="url(#task)"/>
<rect y="728.500" width="1366" height="1" fill="#35404d"/>
<g stroke="#6f8199" fill="url(#btn)">
<rect x="59.500" y="729.500" width="54" height="38" rx="2"/><rect x="117.500" y="729.500" width="0.500" height="38"/>
<rect x="245.500" y="729.500" width="59" height="38" rx="2"/><rect x="307.500" y="729.500" width="59" height="38" rx="2"/><rect x="369.500" y="729.500" width="59" height="38" rx="2"/><rect x="431.500" y="729.500" width="59" height="38" rx="2"/><rect x="493.500" y="729.500" width="58" height="38" rx="2"/><rect x="555.500" y="729.500" width="54" height="38" rx="2"/><rect x="610.500" y="729.500" width="4" height="38" rx="1"/><rect x="617.500" y="729.500" width="59" height="38" rx="2"/>
</g>
<!-- start orb -->
<circle cx="27" cy="748" r="18" fill="#2a5d9e" stroke="#8ba0b8" stroke-width="1.500"/>
<path d="M14 742C20 735 34 735 40 742C36 747 18 747 14 742Z" fill="#6fa0d0" opacity=".6"/>
<path d="M19 741L26 740V747L19 748Z" fill="#d9502b"/><path d="M27 740L35 738V746L27 747Z" fill="#7fb23a"/><path d="M19 749L26 748V755L19 755Z" fill="#3d8bd6"/><path d="M27 748L35 747V755L27 755Z" fill="#e8b62a"/>
<!-- folder -->
<path d="M71 738H84L87 741H101V758H71Z" fill="#e8c76a" stroke="#c4a24a"/><rect x="73" y="736" width="26" height="6" fill="#f7efc8" stroke="#ccc"/><rect x="74" y="735" width="3" height="2" fill="#5a9a40"/><rect x="80" y="735" width="3" height="2" fill="#d04a30"/>
<path d="M75 761V754C75 751 77 750 80 750H92C95 750 97 751 97 754V761H92V756H80V761Z" fill="#8fc3e8" stroke="#6a9cc4"/>
<!-- media -->
<rect x="138" y="738" width="22" height="22" fill="#a8c4de" stroke="#7ea0c0"/><rect x="136" y="737" width="20" height="24" fill="#dbe6ef" stroke="#7ea0c0"/><circle cx="147" cy="749" r="9.500" fill="#e8791e"/><path d="M144 743L153 749L144 755Z" fill="#fff"/>
<!-- z -->
<circle cx="213" cy="748" r="16" fill="#14b4ef"/><text x="213" y="757" font-size="25" font-weight="bold" fill="#fff" text-anchor="middle">Z</text>
<!-- chrome -->
<circle cx="275" cy="749" r="14" fill="#3da83e"/><path d="M275 735A14 14 0 0 1 288 744H275A5 5 0 0 0 270 749L263 741A14 14 0 0 1 275 735Z" fill="#d8352a"/><path d="M288 744A14 14 0 0 1 272 763L279 752A5 5 0 0 0 275 744Z" fill="#f2c72a"/><circle cx="275" cy="749" r="6" fill="#3f82d8" stroke="#fff" stroke-width="1.800"/>
<!-- skype -->
<circle cx="336" cy="748" r="13" fill="#12a8e6"/><circle cx="328" cy="740" r="6.500" fill="#12a8e6"/><circle cx="344" cy="756" r="6.500" fill="#12a8e6"/><text x="336" y="757" font-size="24" font-weight="bold" fill="#fff" text-anchor="middle">S</text>
<!-- red -->
<circle cx="399" cy="739" r="6.500" fill="#9c1414"/><rect x="393" y="737" width="12" height="2.500" fill="#222"/><path d="M387 761C387 748 411 748 411 761Z" fill="#b81c1c"/><circle cx="399" cy="755" r="3.500" fill="none" stroke="#eaa"/>
<!-- winrar -->
<g stroke="#333" stroke-width=".6"><path d="M451 738L462 735L477 738V743L462 745L451 742Z" fill="#5b3a7c"/><path d="M451 743L462 746L477 743V749L462 751L451 748Z" fill="#c048a8"/><path d="M451 749L462 752L477 749V755L462 757L451 754Z" fill="#2d55c8"/><path d="M451 755L462 758L477 755V761L462 763L451 760Z" fill="#1e9a3e"/></g>
<rect x="459" y="744" width="5" height="18" fill="#c49a4a"/>
<!-- word -->
<path d="M508 734H536V760L530 760L508 760Z" fill="#fff" stroke="#2a5fae"/><path d="M508 760L514 735H536" fill="#e5eef8" stroke="#2a5fae"/>
<text x="522" y="752" font-size="22" font-weight="bold" fill="#1e5cb8" text-anchor="middle" style="font-family:'Liberation Serif',serif">W</text>
<path d="M526 753L536 751L535 761L523 759Z" fill="#fff" stroke="#bcd"/>
<!-- acad -->
<rect x="567" y="737" width="30" height="24" fill="#111"/><rect x="567" y="755" width="30" height="6" fill="#b01010"/><path d="M570 757L578 733H584L592 757H586L584 750H577L575 757Z" fill="#ddd" stroke="#666"/>
<rect x="590" y="737" width="7" height="16" fill="#666"/>
<!-- photos -->
<path d="M633 744C629 752 635 763 650 762C640 762 636 752 640 746Z" fill="#e9c06a"/>
<rect x="636" y="737" width="15" height="14" fill="#cbe2a8" stroke="#fff" stroke-width="1.500"/><rect x="644" y="736" width="17" height="14" fill="#9ccbea" stroke="#fff" stroke-width="1.500"/><rect x="640" y="750" width="12" height="10" fill="#dfe8cf" stroke="#fff"/><rect x="650" y="750" width="10" height="7" fill="#9bc85a" stroke="#fff"/>
<circle cx="649" cy="746" r="7" fill="#e4631e"/><circle cx="642" cy="752" r="4" fill="#ec7a2a"/>

<!-- tray -->
<text x="1201" y="750" font-size="13" fill="#e6ecf3" textLength="16" lengthAdjust="spacingAndGlyphs">RU</text>
<path d="M1231 752L1236 748L1241 752Z" fill="#eef2f7"/>
<path d="M1253 746H1256L1260 743V756L1256 753H1253Z" fill="#dfe6ee" stroke="#556"/><path d="M1263 745C1265 748 1265 751 1263 754M1266 743C1269 747 1269 752 1266 756" fill="none" stroke="#e6ecf3"/>
<text x="1300" y="745" font-size="13" fill="#eef2f7" textLength="27" lengthAdjust="spacingAndGlyphs">21:06</text>
<text x="1286" y="762" font-size="13" fill="#eef2f7" textLength="54" lengthAdjust="spacingAndGlyphs">24.04.2013</text>
<rect x="1352.500" y="729.500" width="13" height="38" fill="#7f8ea0" stroke="#5c6a7a"/>

<!-- skype popup -->
<rect x="1142" y="677" width="219" height="6" fill="#f2ece4"/>
<rect x="1142" y="706" width="219" height="16" fill="#fff" opacity=".55"/>
<rect x="1142" y="652" width="219" height="25" fill="#e4a75c"/>
<text x="1146" y="669" font-size="15" font-weight="bold" font-style="italic" fill="#f6dfc0" textLength="33" lengthAdjust="spacingAndGlyphs">skype</text>
<rect x="1142" y="722" width="219" height="4" fill="#c9924c" opacity=".9"/>
<circle cx="1157" cy="692" r="6.500" fill="#ea7d8c"/><circle cx="1152" cy="688" r="2.500" fill="#ea7d8c"/><circle cx="1162" cy="696" r="2.500" fill="#ea7d8c"/><rect x="1153" y="691" width="8" height="2" fill="#fff"/>
<text x="1168" y="697" font-size="12" fill="#555" textLength="70" lengthAdjust="spacingAndGlyphs">HoLLyWooD=]</text>
<text x="1168" y="713" font-size="12" fill="#666" textLength="32" lengthAdjust="spacingAndGlyphs">в сети</text>
</svg>
</body></html>
